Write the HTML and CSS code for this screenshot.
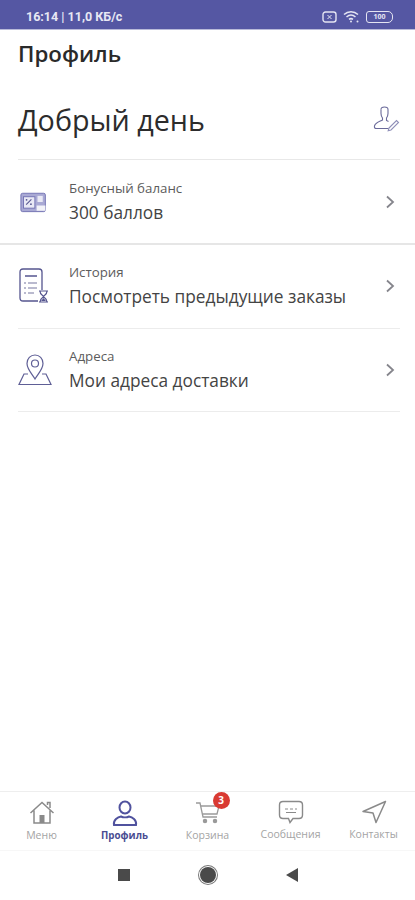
FILE: index.html
```html
<!DOCTYPE html>
<html lang="ru">
<head>
  <meta charset="UTF-8" />
  <meta name="viewport" content="width=device-width, initial-scale=1.0" />
  <title>Профиль</title>
  <link rel="stylesheet" href="styles.css">
</head>
<body>
  <div class="status-bar">
    <span class="status-time">16:14 | 11,0 КБ/с</span>
    <div class="status-icons">
      <svg width="15" height="12" viewBox="0 0 15 12" fill="none" stroke="#e4e4f2" stroke-width="1.4"><rect x="1" y="1" width="13" height="10" rx="2.5"/><path d="M5.5 4l4 4M9.5 4l-4 4" stroke-width="1"/></svg>
      <svg width="17" height="13" viewBox="0 0 17 13" fill="none" stroke="#e4e4f2" stroke-width="1.5"><path d="M1 4.5c4-3.800 10-3.800 14 0M3.500 7c2.700-2.400 6.300-2.400 9 0M6 9.400c1.300-1 2.700-1 4 0"/><circle cx="8" cy="11.500" r="1" fill="#e4e4f2" stroke="none"/><circle cx="14.500" cy="11.500" r="1" fill="#e4e4f2" stroke="none"/></svg>
      <div class="battery"><span>100</span></div>
    </div>
  </div>

  <main class="content">
    <h1 class="page-title">Профиль</h1>
    <div class="greeting">
      <span>Добрый день</span>
      <svg width="28" height="28" viewBox="0 0 28 28" fill="none" stroke="#6a6a9a" stroke-width="1.1">
        <path d="M9 3.500c0-1.500 1.500-2.500 3.500-2.500s3.500 1 3.500 2.500v4c0 2-.8 3.500-1.500 4.500v2.500l2 1"/>
        <path d="M9 3.500v4c0 2 .8 3.500 1.500 4.500v2c-2.500 1.500-7 2.500-8 6 -.4 1.500.2 2.500 2 2.500h12"/>
        <path d="M17 22l7.500-7.500 2 2L19 24l-2.800.7z" stroke="#8f8fb8"/>
      </svg>
    </div>

    <a class="row row-wide">
      <div class="row-icon">
        <svg class="bonus-icon" width="28" height="24" viewBox="0 0 32 26">
          <rect x="1" y="3" width="28" height="21" rx="2" fill="#a9a9d4" stroke="#6d6db0" stroke-width="1"/>
          <rect x="4" y="7" width="13" height="13" fill="#e9e9f5" stroke="#6d6db0" stroke-width="1"/>
          <path d="M7 16l6-6" stroke="#55558f" stroke-width="1.200"/>
          <circle cx="7.500" cy="10.500" r="1" fill="#55558f"/><circle cx="12.500" cy="15.500" r="1" fill="#55558f"/>
          <rect x="20" y="6" width="6" height="7" fill="#e9e9f5"/>
          <rect x="19" y="17" width="10" height="6" fill="#f2f2f8"/>
        </svg>
      </div>
      <div class="row-text">
        <span class="row-label">Бонусный баланс</span>
        <span class="row-value">300 баллов</span>
      </div>
      <svg class="chevron" width="10" height="14" viewBox="0 0 10 14" fill="none" stroke="#85858c" stroke-width="1.800"><path d="M2 1.500L8 7l-6 5.500"/></svg>
    </a>

    <a class="row">
      <div class="row-icon">
        <svg width="32" height="36" viewBox="0 0 32 36" fill="none">
          <path d="M20 33H5c-2 0-3-1-3-3V4c0-2 1-3 3-3h16c2 0 3 1 3 3v18" stroke="#55558f" stroke-width="1.300"/>
          <path d="M7 8h12" stroke="#55558f" stroke-width="1.500"/>
          <path d="M6 15h2M10 15h9M6 20h2M10 20h9M6 25h2M10 25h6" stroke="#77779f" stroke-width="1.200"/>
          <path d="M21 23h9M21 34h9M22 23c0 4 3 4 3.500 5.500 0 1.500-3.500 1.500-3.500 5.500M29 23c0 4-3 4-3.500 5.500 0 1.500 3.500 1.500 3.500 5.500" stroke="#55558f" stroke-width="1.200"/>
          <path d="M23 33l2.500-3 2.500 3z" fill="#55558f"/>
        </svg>
      </div>
      <div class="row-text">
        <span class="row-label">История</span>
        <span class="row-value">Посмотреть предыдущие заказы</span>
      </div>
      <svg class="chevron" width="10" height="14" viewBox="0 0 10 14" fill="none" stroke="#85858c" stroke-width="1.800"><path d="M2 1.500L8 7l-6 5.500"/></svg>
    </a>

    <a class="row">
      <div class="row-icon">
        <svg width="34" height="34" viewBox="0 0 34 34" fill="none" stroke="#5f5f96" stroke-width="1.200">
          <path d="M17 26c-3-5-8-10-8-15.500C9 5.500 12.500 2 17 2s8 3.500 8 8.500C25 16 20 21 17 26z"/>
          <circle cx="17" cy="10.500" r="3.500"/>
          <path d="M10 21H6L1 31.500h32L28 21h-4"/>
        </svg>
      </div>
      <div class="row-text">
        <span class="row-label">Адреса</span>
        <span class="row-value">Мои адреса доставки</span>
      </div>
      <svg class="chevron" width="10" height="14" viewBox="0 0 10 14" fill="none" stroke="#85858c" stroke-width="1.800"><path d="M2 1.500L8 7l-6 5.500"/></svg>
    </a>
  </main>

  <nav class="tab-bar">
    <a class="tab">
      <svg width="26" height="25" viewBox="0 0 26 25" fill="none" stroke="#8a8a8a" stroke-width="1.500">
        <path d="M1.500 13L13 2.500 24.500 13M5 10.500V23h16V10.500M18.500 5V2.500h2.500V8"/>
        <rect x="10.500" y="15" width="5" height="8" fill="#8a8a8a" stroke="none"/>
      </svg>
      <span>Меню</span>
    </a>
    <a class="tab active">
      <svg width="26" height="26" viewBox="0 0 26 26" fill="none" stroke="#50529e" stroke-width="2">
        <ellipse cx="13" cy="7.500" rx="5.500" ry="6"/>
        <path d="M2 25c-1-5 4-8 7-8.500 2 1 6 1 8 0 3 .5 8 3.500 7 8.500z"/>
      </svg>
      <span>Профиль</span>
    </a>
    <a class="tab">
      <div class="cart-wrap">
        <svg width="26" height="25" viewBox="0 0 26 25" fill="none" stroke="#9a9a9a" stroke-width="1.300">
          <path d="M1 3h4l3 14h14"/>
          <path d="M6 6h18l-2 8H8"/>
          <circle cx="10" cy="21" r="1.600" fill="#9a9a9a"/><circle cx="20" cy="21" r="1.600" fill="#9a9a9a"/>
        </svg>
        <span class="badge">3</span>
      </div>
      <span>Корзина</span>
    </a>
    <a class="tab">
      <svg width="26" height="24" viewBox="0 0 26 24" fill="none" stroke="#8a8a8a" stroke-width="1.400">
        <path d="M5 1.500h16c2 0 3.500 1.500 3.500 3.500v10c0 2-1.500 3.500-3.500 3.500h-6L12 22.500l-1.500-4H5c-2 0-3.500-1.500-3.500-3.500V5c0-2 1.500-3.500 3.500-3.500z"/>
        <path d="M7 9h3M12 9h3M17 9h2M8 12.500h10" stroke-width="1"/>
      </svg>
      <span>Сообщения</span>
    </a>
    <a class="tab">
      <svg width="26" height="24" viewBox="0 0 26 24" fill="none" stroke="#8a8a8a" stroke-width="1.500" stroke-linejoin="round">
        <path d="M24.500 1.500L2 11.500l10 1.500 3 9.500z"/>
      </svg>
      <span>Контакты</span>
    </a>
  </nav>

  <div class="system-nav">
    <div class="sys-square"></div>
    <div class="sys-circle"></div>
    <div class="sys-back"></div>
  </div>
</body>
</html>
```

FILE: styles.css
```css
* {
  box-sizing: border-box;
}

body {
  font-family: "Open Sans", "Noto Sans", sans-serif;
  margin: 0;
  height: 900px;
  display: flex;
  flex-direction: column;
  background-color: #ffffff;
  color: #222;
  overflow: hidden;
}

.status-bar {
  height: 30px;
  padding: 4px 22px 0 26px;
  background: #5557a3;
  border-bottom: 1px solid #b9bad9;
  display: flex;
  justify-content: space-between;
  align-items: center;
}

.status-time {
  color: #e8e8f4;
  font-family: Roboto, sans-serif;
  font-size: 12.500px;
  font-weight: 700;
}

.status-icons {
  display: flex;
  align-items: center;
  gap: 6px;
}

.battery {
  width: 27px;
  height: 12px;
  border: 1.500px solid #e4e4f2;
  border-radius: 3px 5px 5px 3px;
  display: flex;
  align-items: center;
  justify-content: center;
}

.battery span {
  color: #e4e4f2;
  font-size: 7px;
  font-weight: 700;
}

.content {
  flex: 1;
}

.page-title {
  margin: 0;
  padding: 9px 18px 0;
  height: 56px;
  font-size: 22.300px;
  line-height: 30px;
  font-weight: 600;
  color: #2a2a2a;
}

.greeting {
  height: 74px;
  margin: 0 15px 0 18px;
  padding-bottom: 6px;
  border-bottom: 1px solid #e8e8e8;
  display: flex;
  justify-content: space-between;
  align-items: center;
  font-size: 28.700px;
  color: #2c2c2c;
}

.row {
  height: 83.500px;
  margin: 0 15px 0 18px;
  border-bottom: 1px solid #ececec;
  display: flex;
  align-items: center;
}

.row-wide {
  height: 85px;
  margin: 0;
  padding: 0 15px 0 18px;
  border-bottom: 2px solid #e6e6e6;
}

.row-icon {
  width: 51px;
  flex-shrink: 0;
  display: flex;
}

.bonus-icon {
  margin-left: 2px;
}

.row-text {
  flex: 1;
  display: flex;
  flex-direction: column;
  gap: 4px;
}

.row-label {
  font-size: 13.300px;
  line-height: 17px;
  color: #5c5c5c;
}

.row-value {
  font-size: 17.300px;
  line-height: 23px;
  color: #444;
}

.chevron {
  margin-right: 5px;
}

.tab-bar {
  height: 60px;
  padding-top: 8px;
  border-top: 1px solid #eeeeee;
  border-bottom: 1px solid #f7f7f7;
  display: flex;
  justify-content: space-between;
}

.tab {
  flex: 1;
  display: flex;
  flex-direction: column;
  align-items: center;
  gap: 3px;
  font-size: 10.500px;
  line-height: 14px;
  color: #a4a4a4;
}

.tab.active {
  color: #4a4c92;
  font-size: 9.800px;
  font-weight: 700;
}

.cart-wrap {
  position: relative;
  height: 25px;
}

.badge {
  position: absolute;
  top: -8px;
  right: -9px;
  width: 17px;
  height: 17px;
  border-radius: 50%;
  background: #d93a32;
  color: #fff;
  font-size: 10px;
  font-weight: 700;
  line-height: 17px;
  text-align: center;
}

.system-nav {
  height: 49px;
  padding-bottom: 2px;
  display: flex;
  align-items: center;
  justify-content: center;
  gap: 70px;
}

.sys-square {
  width: 12px;
  height: 12px;
  background: #4a4a4a;
}

.sys-circle {
  width: 16px;
  height: 16px;
  border-radius: 50%;
  background: #4a4a4a;
  box-shadow: 0 0 0 1px #fff, 0 0 0 2px #777;
}

.sys-back {
  width: 0;
  height: 0;
  border-top: 7px solid transparent;
  border-bottom: 7px solid transparent;
  border-right: 12px solid #4a4a4a;
}
```
